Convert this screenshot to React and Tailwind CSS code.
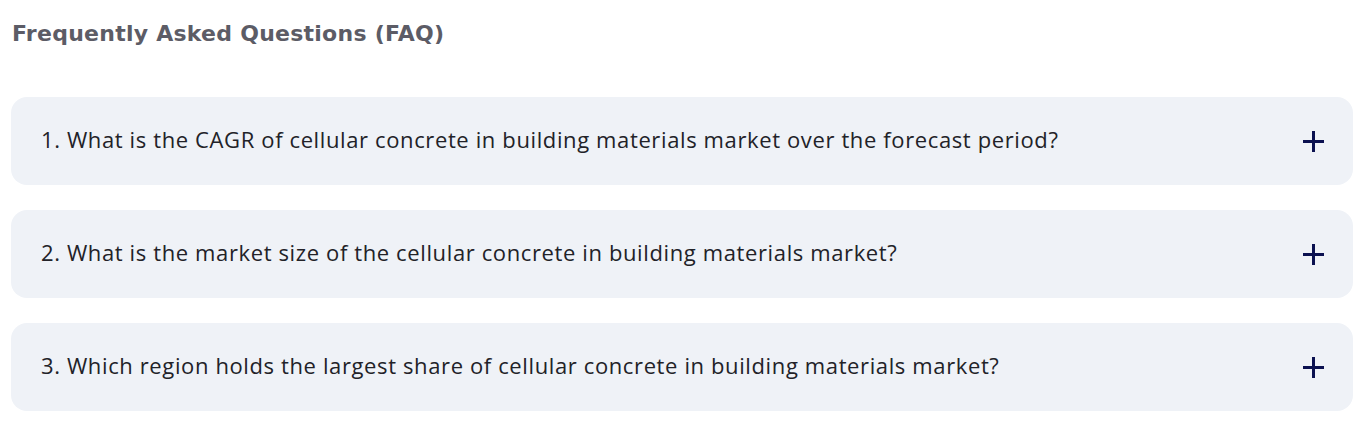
const questions = [
  '1. What is the CAGR of cellular concrete in building materials market over the forecast period?',
  '2. What is the market size of the cellular concrete in building materials market?',
  '3. Which region holds the largest share of cellular concrete in building materials market?',
];

function PlusIcon() {
  return (
    <svg width="21" height="21" viewBox="0 0 21 21" className="shrink-0">
      <path d="M10.5 0v21M0 10.5h21" stroke="#0b1150" strokeWidth="3" />
    </svg>
  );
}

export default function App() {
  return (
    <div className="bg-white min-h-screen px-[11px] pt-[19px] font-['Open_Sans',sans-serif]">
      <h2 className="pl-px text-[22px] leading-[30px] font-bold text-[#5c5c66] tracking-[0.25px] font-['DejaVu_Sans',sans-serif]">
        Frequently Asked Questions (FAQ)
      </h2>
      <div className="mt-[48px] flex flex-col gap-[25px] w-[1342px]">
        {questions.map(q => (
          <div
            key={q}
            className="h-[88px] rounded-2xl bg-[#eff2f7] flex items-center justify-between pl-[30px] pr-[29px]"
          >
            <span className="pb-[3px] text-[22px] text-[#222228] tracking-[0.62px]">{q}</span>
            <PlusIcon />
          </div>
        ))}
      </div>
    </div>
  );
}
